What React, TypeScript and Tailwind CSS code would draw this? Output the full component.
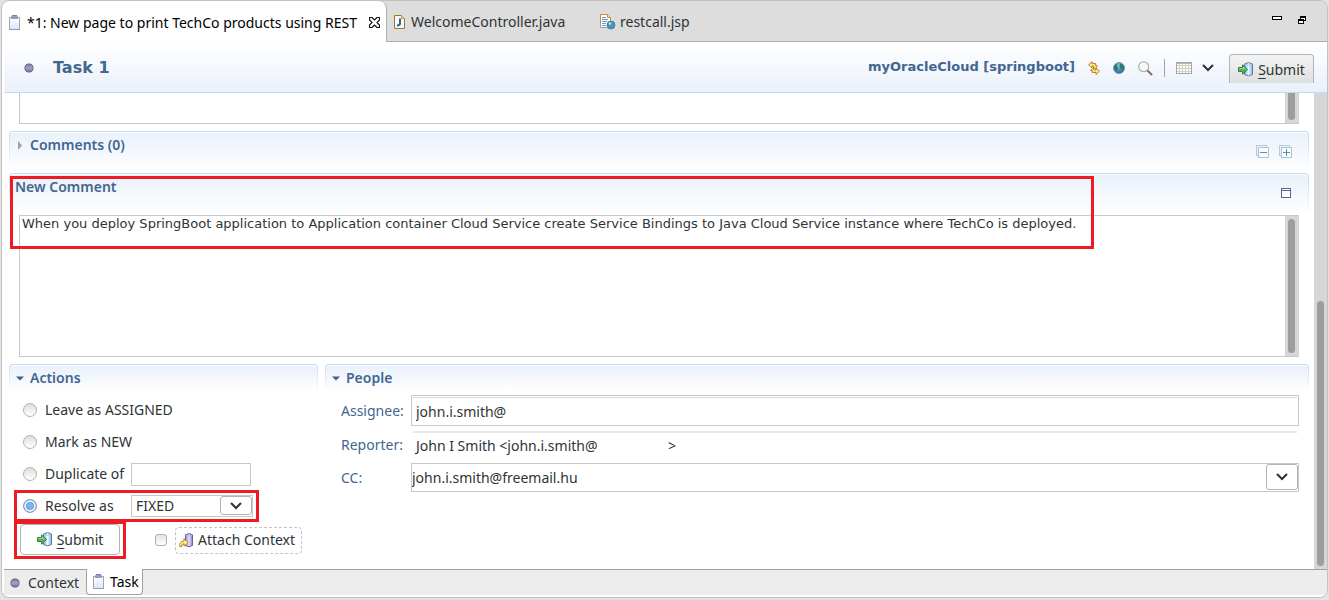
import React, { useState } from "react";

const ui = "font-['Noto_Sans','Open_Sans',sans-serif]";

function ClipboardIcon() {
  return (
    <svg width="12" height="15" viewBox="0 0 12 15" aria-hidden="true">
      <defs>
        <linearGradient id="clip" x1="0" y1="0" x2="0" y2="1">
          <stop offset="0" stopColor="#fff" />
          <stop offset="1" stopColor="#dbe6f7" />
        </linearGradient>
      </defs>
      <rect x="0.5" y="2.5" width="10" height="12" fill="url(#clip)" stroke="#8f9fc0" />
      <path d="M0.5 13V2.5H10.5V13" fill="none" stroke="#b3ab8c" strokeOpacity=".6" />
      <path d="M2 4V1.500Q2 1 3 1V0.500h5V1Q9 1 9 1.500V4z" fill="#8ca0c8" />
      <path d="M3 0.500h5" stroke="#6f86b4" />
    </svg>
  );
}

function DotIcon() {
  return (
    <svg width="10" height="10" viewBox="0 0 10 10" aria-hidden="true">
      <defs>
        <linearGradient id="dot" x1="0" y1="0" x2="0" y2="1">
          <stop offset="0" stopColor="#77779a" />
          <stop offset="0.5" stopColor="#a3a3b8" />
          <stop offset="1" stopColor="#73739c" />
        </linearGradient>
      </defs>
      <circle cx="5" cy="5" r="4.1" fill="url(#dot)" stroke="#57508a" strokeWidth=".8" />
    </svg>
  );
}

function CloseIcon() {
  return (
    <svg width="11" height="11" viewBox="0 0 11 11" aria-hidden="true">
      <path
        d="M0.5 0.5H3L5.500 3L8 0.500H10.500V3L8 5.500L10.500 8V10.500H8L5.500 8L3 10.500H0.500V8L3 5.500L0.500 3Z"
        fill="#fff"
        stroke="#111"
        strokeWidth="1.200"
      />
    </svg>
  );
}

function JavaIcon() {
  return (
    <svg width="11" height="14" viewBox="0 0 11 14" aria-hidden="true">
      <path d="M0.5 0.5H7.500L10.500 3.500V13.500H0.500Z" fill="#f7fafd" stroke="#a1792a" />
      <path d="M7.500 0.500V3.500H10.500" fill="#f3dca0" stroke="#c9962f" />
      <path d="M6 3.500V8.500Q6 10.500 3 10.500" fill="none" stroke="#2c6497" strokeWidth="2" />
    </svg>
  );
}

function JspIcon() {
  return (
    <svg width="16" height="16" viewBox="0 0 16 16" aria-hidden="true">
      <path d="M0.5 0.5H7.500L10.500 3.500V13.500H0.500Z" fill="#fbfdff" stroke="#93a4b5" />
      <path d="M0.500 9V0.500H7.500L10.500 3.500V6" fill="none" stroke="#c1913c" />
      <path d="M7.500 0.500V3.500H10.500" fill="#f3dca0" stroke="#c9962f" />
      <path d="M2 3.500H6M2 5.500H8M2 7.500H7M2 9.500H6M2 11.500H6" stroke="#7195ce" />
      <circle cx="11" cy="11" r="4" fill="#4a93c9" stroke="#3d7aa6" strokeWidth="0.8" />
      <path d="M8 9Q9.500 7.500 12 8L11 10L9 11.500ZM12 11L14.500 10L14 13L12 14Z" fill="#55a35c" />
      <circle cx="10" cy="9.500" r="1.300" fill="#d9effa" opacity=".8" />
    </svg>
  );
}

function MinimizeIcon() {
  return (
    <svg width="10" height="4" viewBox="0 0 10 4" aria-hidden="true">
      <rect x="0.5" y="0.5" width="9" height="3" fill="#fff" stroke="#000" />
    </svg>
  );
}

function RestoreIcon() {
  return (
    <svg width="8" height="8" viewBox="0 0 8 8" shapeRendering="crispEdges" aria-hidden="true">
      <rect x="2.500" y="0.500" width="5" height="4" fill="#fff" stroke="#000" />
      <path d="M2 1.500H8" stroke="#000" />
      <rect x="0.500" y="3.500" width="5" height="4" fill="#fff" stroke="#000" />
      <path d="M0 4.500H6" stroke="#000" />
    </svg>
  );
}

function SyncIcon() {
  return (
    <svg width="12" height="14" viewBox="0 0 12 14" aria-hidden="true">
      <g fill="#fdeaa0" stroke="#b9800f" strokeLinejoin="round">
        <path d="M4 0.600L0.600 3.800L4 7V5H5.500V7.500H7L9.500 5.200L7.800 5V2.600H4Z" />
        <path d="M8 13.400L11.400 10.200L8 7V9H6.500L4.500 7.500L2.500 9.500H4.200V11.400H8Z" />
      </g>
    </svg>
  );
}

function GlobeIcon() {
  return (
    <svg width="12" height="12" viewBox="0 0 12 12" aria-hidden="true">
      <defs>
        <radialGradient id="globe" cx=".35" cy=".3" r=".8">
          <stop offset="0" stopColor="#9ccfe6" />
          <stop offset="0.500" stopColor="#4a93bc" />
          <stop offset="1" stopColor="#2a629a" />
        </radialGradient>
      </defs>
      <circle cx="6" cy="6" r="5.500" fill="url(#globe)" stroke="#5c8cab" strokeWidth=".8" />
      <path d="M1.200 4.500L3 2L4.500 2.500L4 4.500L5 6L4 8.500L3 9.500L1.200 6.500Z" fill="#2a7568" />
      <path d="M7 2L9.500 2.500L11 5.500L9.500 8.500L8.500 9L8 6.500L6.500 5Z" fill="#2f7b65" />
    </svg>
  );
}

function SearchIcon() {
  return (
    <svg width="15" height="15" viewBox="0 0 15 15" aria-hidden="true">
      <path d="M9.500 9.500L13.500 13.500" stroke="#8c6c60" strokeWidth="2" strokeLinecap="round" />
      <circle cx="5.700" cy="5.700" r="5" fill="#f5f8fb" stroke="#aaa690" strokeWidth="1.100" />
      <path d="M2.500 5Q3 2.700 5.500 2.500" fill="none" stroke="#fff" />
    </svg>
  );
}

function CalendarIcon() {
  return (
    <svg width="16" height="12" viewBox="0 0 16 12" aria-hidden="true">
      <rect x="0.500" y="0.500" width="15" height="11" fill="#fff" stroke="#a5a59c" />
      <path d="M1 1.500H15" stroke="#a9bdd4" />
      <path d="M1 3.500H15M1 6.500H15M1 9.500H15M3.500 2V11M6.500 2V11M9.500 2V11M12.500 2V11" stroke="#d0cfc4" />
    </svg>
  );
}

function Chevron() {
  return (
    <svg width="12" height="8" viewBox="0 0 12 8" aria-hidden="true">
      <path d="M1 1L6 6L11 1" fill="none" stroke="#2e3436" strokeWidth="2" />
    </svg>
  );
}

function SubmitIcon() {
  return (
    <svg width="16" height="15" viewBox="0 0 16 15" aria-hidden="true">
      <defs>
        <linearGradient id="cyl">
          <stop offset="0" stopColor="#7ea9cd" />
          <stop offset="0.500" stopColor="#f1f8fd" />
          <stop offset="1" stopColor="#8ab4d6" />
        </linearGradient>
      </defs>
      <path d="M6.500 2Q10.500 -0.800 14.500 2V12.500Q10.500 15.300 6.500 12.500Z" fill="url(#cyl)" stroke="#4a84b5" />
      <path d="M7 2.300Q10.500 4 14 2.300" fill="none" stroke="#a9cbe4" />
      <path d="M0.500 5.500H4.500V2.800L9.500 7.500L4.500 12.200V9.500H0.500Z" fill="#5fb05c" stroke="#2f8244" />
      <path d="M1.500 6.500H5.500V5.200L7.800 7.300" fill="none" stroke="#a5d99b" />
    </svg>
  );
}

function AttachIcon() {
  return (
    <svg width="15" height="15" viewBox="0 0 15 15" aria-hidden="true">
      <defs>
        <linearGradient id="pcyl">
          <stop offset="0" stopColor="#9087c5" />
          <stop offset="0.500" stopColor="#e7e4fa" />
          <stop offset="1" stopColor="#8a80c0" />
        </linearGradient>
      </defs>
      <path d="M6.500 1.800Q10 -0.600 13.500 1.800V12.500Q10 15 6.500 12.500Z" fill="url(#pcyl)" stroke="#6a60a4" />
      <path d="M7 2.200Q10 3.700 13 2.200" fill="none" stroke="#bfb8e4" />
      <path d="M0.700 13.500Q0.200 8.300 5 8V5.700L9.300 9.500L5 13.200V10.800Q2.500 10.800 2.800 13.500Z" fill="#fce9a2" stroke="#b58318" />
    </svg>
  );
}

function FoldIcon({ plus = false }: { plus?: boolean }) {
  return (
    <svg width="13" height="13" viewBox="0 0 13 13" aria-hidden="true">
      <rect x="0.500" y="0.500" width="10" height="10" fill="#e9f3f9" stroke="#b7ccdb" />
      <rect x="2.500" y="2.500" width="10" height="10" fill="#f8fcff" stroke="#adc4d5" />
      <path d={plus ? "M4 7.500H11M7.500 4V11" : "M4 7.500H11"} stroke="#5a8fb5" />
    </svg>
  );
}

function MaximizeIcon() {
  return (
    <svg width="10" height="10" viewBox="0 0 10 10" aria-hidden="true">
      <rect x="0.500" y="0.500" width="9" height="9" fill="#fff" stroke="#56648c" />
      <path d="M0 2.500H10" stroke="#56648c" />
    </svg>
  );
}

function Twistie({ open }: { open: boolean }) {
  return open ? (
    <svg width="8" height="5" viewBox="0 0 8 5" aria-hidden="true">
      <path d="M0 0.500H8L4 4.500Z" fill="#3d638b" />
    </svg>
  ) : (
    <svg width="8" height="9" viewBox="0 0 8 9" aria-hidden="true">
      <path d="M2 0L6 4.500L2 9Z" fill="#a0a0a0" />
    </svg>
  );
}

function SectionHead({ children, tall = false }: { children: React.ReactNode; tall?: boolean }) {
  return (
    <div className="rounded-t bg-linear-to-b from-[#c3daf2] to-white px-px pt-px">
      <div
        className={`flex justify-between rounded-t-[3px] border-t border-white bg-linear-to-b from-[#eaf1fb] to-white pr-4 text-sm font-semibold text-[#426690] ${
          tall ? "h-[41px]" : "h-[27px]"
        }`}
      >
        {children}
      </div>
    </div>
  );
}

function Radio({ id, checked, onChange }: { id: string; checked: boolean; onChange: () => void }) {
  return (
    <input
      id={id}
      type="radio"
      name="action"
      checked={checked}
      onChange={onChange}
      className="size-3.5 shrink-0 appearance-none rounded-full border border-[#b1b1a9] bg-linear-to-b from-[#deded8] to-white checked:border-[#8d99a5] checked:bg-radial checked:from-[#7ab6f5] checked:from-30% checked:to-[#3879c5] checked:to-65% checked:shadow-[inset_0_0_0_2px_#f0f4f8]"
    />
  );
}

function SubmitLabel() {
  return (
    <>
      <SubmitIcon />
      <span>
        <span className="underline underline-offset-3">S</span>ubmit
      </span>
    </>
  );
}

const iconButton = "flex items-center justify-center";
const actionRow = "flex h-8 items-center gap-2 border-3 px-1.5";

export default function App() {
  const [action, setAction] = useState("resolve");
  const [open, setOpen] = useState({ comments: false, actions: true, people: true });

  return (
    <div className={`flex min-h-screen flex-col bg-[#e3e3e3] px-px pb-0.5 text-sm leading-5 text-[#2e3436] ${ui}`}>
      <div className="flex grow flex-col overflow-hidden rounded-lg border border-[#c2c2c2] bg-white">
        <div role="tablist" className="flex h-[41px] border-b border-[#adadad] bg-[#dddddd]">
          <div className="-mb-px flex h-[41px] w-[385px] items-center justify-between rounded-t-lg border-r border-[#adadad] bg-white pt-0.5 pr-1.5 pl-[7px] whitespace-nowrap text-black">
            <button role="tab" aria-selected="true" className="flex items-center gap-1.5">
              <ClipboardIcon />
              <span>*1: New page to print TechCo products using REST</span>
            </button>
            <button aria-label="Close tab">
              <CloseIcon />
            </button>
          </div>
          <button role="tab" aria-selected="false" className="ml-[7px] flex w-[206px] items-center gap-1.5 pt-0.5">
            <JavaIcon />
            WelcomeController.java
          </button>
          <button role="tab" aria-selected="false" className="flex items-center gap-1 pt-0.5">
            <JspIcon />
            restcall.jsp
          </button>
          <div className="ml-auto flex items-start gap-4 pt-[15px] pr-[21px]">
            <button aria-label="Minimize" className={iconButton}>
              <MinimizeIcon />
            </button>
            <button aria-label="Restore" className={iconButton}>
              <RestoreIcon />
            </button>
          </div>
        </div>

        <header className="ml-0.5 flex h-[51px] items-center border-b border-[#c3d9f3] bg-linear-to-b from-white to-[#eaf1fb] pt-0.5 pr-[13px] pl-5 font-['DejaVu_Sans',sans-serif] font-bold text-[#426690]">
          <DotIcon />
          <h1 className="ml-[19px] text-base">Task 1</h1>
          <span className="ml-auto pb-0.5 text-[13px]">myOracleCloud [springboot]</span>
          <div className="ml-[13px] flex items-center gap-[13px]">
            <button aria-label="Synchronize" className={iconButton}>
              <SyncIcon />
            </button>
            <button aria-label="Open in browser" className={iconButton}>
              <GlobeIcon />
            </button>
            <button aria-label="Find" className={iconButton}>
              <SearchIcon />
            </button>
          </div>
          <span className="mx-[11px] h-[18px] w-px bg-[#a5a5a5]" />
          <button aria-label="Schedule" className={`${iconButton} gap-2.5`}>
            <CalendarIcon />
            <Chevron />
          </button>
          <button
            className={`ml-[15px] flex h-[29px] w-[85px] items-center justify-center gap-1 rounded-t-sm border border-b-0 border-[#b4b4b4] bg-linear-to-b from-[#f4f4f4] to-[#dfdfdf] pt-0.5 font-normal text-[#2e3436] ${ui}`}
          >
            <SubmitLabel />
          </button>
        </header>

        <div className="flex grow">
          <main className="min-w-0 grow px-[5px] pl-[7px]">
            <div className="mr-2.5 ml-2.5 flex h-[31px] justify-end border-b border-l border-[#c8c8c8]">
              <div className="flex w-3.5 bg-[#d6d6d6] pb-[3px] pl-[3px]">
                <div className="w-[7px] rounded-b-full bg-[#9d9d9d]" />
              </div>
            </div>

            <section className="mt-[7px]">
              <SectionHead tall>
                <button
                  aria-expanded={open.comments}
                  onClick={() => setOpen({ ...open, comments: !open.comments })}
                  className="flex h-6 items-center gap-1.5 pl-1.5"
                >
                  <Twistie open={open.comments} />
                  Comments (0)
                </button>
                <div className="flex items-center gap-2.5 pb-1">
                  <button aria-label="Collapse all" className={iconButton}>
                    <FoldIcon />
                  </button>
                  <button aria-label="Expand all" className={iconButton}>
                    <FoldIcon plus />
                  </button>
                </div>
              </SectionHead>
            </section>

            <section className="relative">
              <SectionHead tall>
                <label htmlFor="comment" className="flex h-6 items-center pl-[5px]">
                  New Comment
                </label>
                <button aria-label="Maximize" className={`${iconButton} pr-px pb-1`}>
                  <MaximizeIcon />
                </button>
              </SectionHead>
              <div className="mx-2.5 flex h-[142px] border border-r-0 border-[#c8c8c8] bg-white">
                <textarea
                  id="comment"
                  className="min-w-0 grow resize-none overflow-hidden bg-transparent px-0.5 font-['DejaVu_Sans',sans-serif] text-[13px] leading-4 outline-none"
                  defaultValue="When you deploy SpringBoot application to Application container Cloud Service create Service Bindings to Java Cloud Service instance where TechCo is deployed."
                />
                <div className="flex w-3.5 bg-[#d6d6d6] py-[3px] pl-[3px]">
                  <div className="w-[7px] rounded-full bg-[#9d9d9d]" />
                </div>
              </div>
              <div className="pointer-events-none absolute top-[3px] left-px h-[73px] w-[1084px] border-3 border-[#ed1c24]" />
            </section>

            <div className="mt-[7px] flex items-start gap-[7px]">
              <section className="w-[309px] shrink-0">
                <SectionHead>
                  <button
                    aria-expanded={open.actions}
                    onClick={() => setOpen({ ...open, actions: !open.actions })}
                    className="flex h-6 items-center gap-1.5 pl-1.5"
                  >
                    <Twistie open={open.actions} />
                    Actions
                  </button>
                </SectionHead>
                {open.actions && (
                  <div className="flex flex-col items-start pt-0.5 pl-[5px]">
                    <div className={`${actionRow} border-transparent`}>
                      <Radio id="leave" checked={action === "leave"} onChange={() => setAction("leave")} />
                      <label htmlFor="leave">Leave as ASSIGNED</label>
                    </div>
                    <div className={`${actionRow} border-transparent`}>
                      <Radio id="mark" checked={action === "mark"} onChange={() => setAction("mark")} />
                      <label htmlFor="mark">Mark as NEW</label>
                    </div>
                    <div className={`${actionRow} border-transparent`}>
                      <Radio id="duplicate" checked={action === "duplicate"} onChange={() => setAction("duplicate")} />
                      <label htmlFor="duplicate" className="w-[78px] shrink-0 whitespace-nowrap">
                        Duplicate of
                      </label>
                      <input aria-label="Duplicate of task" className="h-[23px] w-[120px] border border-[#c8c8c8] px-1 outline-none" />
                    </div>
                    <div className={`${actionRow} w-[245px] border-[#ed1c24]`}>
                      <Radio id="resolve" checked={action === "resolve"} onChange={() => setAction("resolve")} />
                      <label htmlFor="resolve" className="w-[78px] shrink-0 whitespace-nowrap">
                        Resolve as
                      </label>
                      <div className="relative w-[122px] shrink-0">
                        <select
                          aria-label="Resolution"
                          className="block h-[22px] w-full appearance-none border border-[#c8c8c8] bg-white pl-1 leading-5 outline-none"
                        >
                          <option>FIXED</option>
                        </select>
                        <span className="pointer-events-none absolute top-px right-px flex h-[19px] w-8 items-center justify-center rounded-[3px] border border-[#b4b4b4] bg-white">
                          <Chevron />
                        </span>
                      </div>
                    </div>
                    <div className="-mt-px flex items-center">
                      <div className="border-3 border-[#ed1c24] px-[3px] pb-px">
                        <button className="flex h-[31px] w-[100px] items-center justify-center gap-1 rounded border border-[#b4b4b4] bg-white">
                          <SubmitLabel />
                        </button>
                      </div>
                      <input
                        id="attach"
                        type="checkbox"
                        className="ml-[29px] size-3 appearance-none rounded-[3px] border border-[#b1b1a9] bg-linear-to-b from-[#e4e4df] to-white checked:bg-[#5294e2] checked:bg-none"
                      />
                      <label
                        htmlFor="attach"
                        className="ml-2 flex h-[27px] w-[127px] items-center gap-1 rounded-sm border border-dashed border-[#c4c4c4] pl-[3px] whitespace-nowrap"
                      >
                        <AttachIcon />
                        Attach Context
                      </label>
                    </div>
                  </div>
                )}
              </section>

              <section className="min-w-0 grow">
                <SectionHead>
                  <button
                    aria-expanded={open.people}
                    onClick={() => setOpen({ ...open, people: !open.people })}
                    className="flex h-6 items-center gap-1.5 pl-1.5"
                  >
                    <Twistie open={open.people} />
                    People
                  </button>
                </SectionHead>
                {open.people && (
                  <div className="grid grid-cols-[70px_1fr] items-center gap-y-[5px] pt-[3px] pr-2.5 pl-4 text-[#426690]">
                    <label htmlFor="assignee">Assignee:</label>
                    <div className="h-[31px] border border-[#c8c8c8] p-px">
                      <input
                        id="assignee"
                        defaultValue="john.i.smith@"
                        className="block h-full w-full border-t border-[#dadada] pl-[3px] text-[#2e3436] outline-none"
                      />
                    </div>
                    <label htmlFor="reporter">Reporter:</label>
                    <output id="reporter" className="mx-0.5 flex h-[27px] items-center border-t-2 border-[#e8e8e8] pl-[3px] text-[#2e3436]">
                      <span className="w-[252px]">John I Smith &lt;john.i.smith@</span>
                      <span>&gt;</span>
                    </output>
                    <label htmlFor="cc">CC:</label>
                    <div className="flex h-[29px] border border-[#c8c8c8]">
                      <input
                        id="cc"
                        defaultValue="john.i.smith@freemail.hu"
                        className="min-w-0 grow text-[#2e3436] outline-none"
                      />
                      <button
                        aria-label="Show people"
                        className="flex h-[26px] w-8 items-center justify-center rounded-[3px] border border-[#b4b4b4] bg-white"
                      >
                        <Chevron />
                      </button>
                    </div>
                  </div>
                )}
              </section>
            </div>
          </main>
          <div className="flex w-[13px] shrink-0 items-end justify-center bg-[#d6d6d6] pb-[3px]">
            <div className="h-[56%] w-[7px] rounded-full bg-[#9d9d9d]" />
          </div>
        </div>

        <div role="tablist" className="mb-0.5 ml-0.5 flex h-[26px] border-t border-[#a0a0a0] bg-[#ececec]">
          <button role="tab" aria-selected="false" className="flex w-[82px] items-center gap-2 pl-1.5">
            <DotIcon />
            Context
          </button>
          <button
            role="tab"
            aria-selected="true"
            className="-mt-px flex w-[57px] items-center gap-[5px] rounded-b border border-t-0 border-[#a0a0a0] bg-white pl-1.5 text-black"
          >
            <ClipboardIcon />
            Task
          </button>
        </div>
      </div>
    </div>
  );
}
